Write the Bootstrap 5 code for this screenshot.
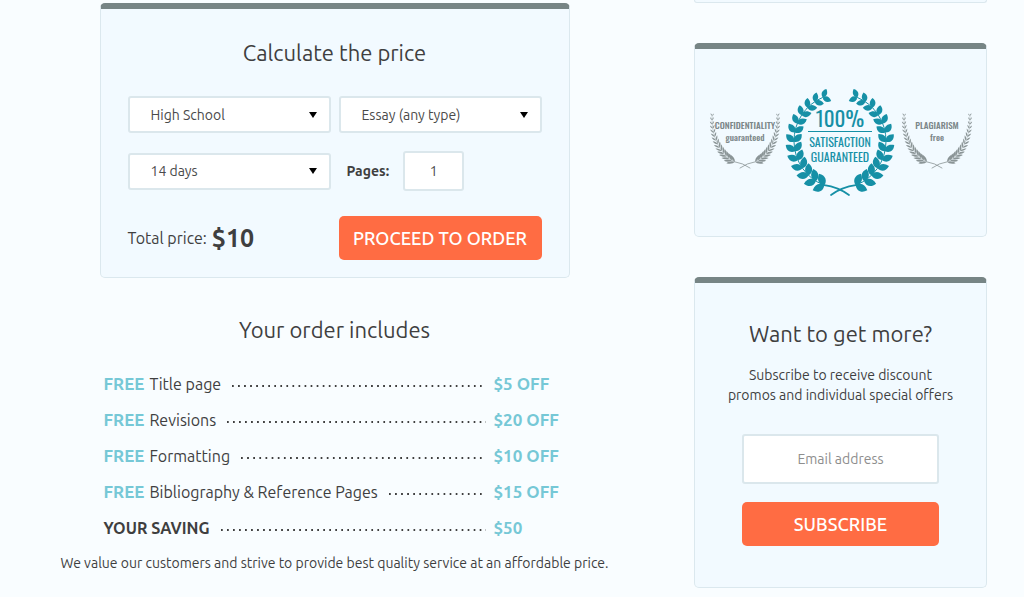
<!DOCTYPE html>
<html lang="en">
<head>
<meta charset="utf-8">
<meta name="viewport" content="width=device-width, initial-scale=1">
<title>Calculate the price</title>
<link href="https://cdn.jsdelivr.net/npm/bootstrap@5.3.0/dist/css/bootstrap.min.css" rel="stylesheet">
<style>
  body { background: #f9fdff; color: #3f3f3f; font-family: Ubuntu, "Noto Sans", sans-serif; font-size: 14px; line-height: 20px; }
  .page-grid { display: grid; grid-template-columns: minmax(0, 1fr) 293px; column-gap: 60px; padding: 0 37px 0 35px; }
  .main-column { padding-top: 3px; }
  .panel { background: #f2faff; border: 1px solid #dbe8ee; border-radius: 5px; }
  .panel-topped { border-top: 6px solid #778585; }
  .panel-end { height: 3px; border-top: 0; border-radius: 0 0 5px 5px; }
  .panel-title { font-size: 22px; line-height: 30px; font-weight: 400; margin: 0; text-align: center; }
  .order-width { width: 100%; max-width: 470px; }
  .side-column { display: flex; flex-direction: column; gap: 40px; }
  .calc-form { padding: 29px 27px 17px; }
  .calc-grid { display: grid; grid-template-columns: 1fr 1fr; column-gap: 8px; row-gap: 18px; align-items: center; margin-top: 28px; }
  .pages-group { display: flex; align-items: center; gap: 14px; padding-left: 8px; }
  .field { border: 2px solid #dbe7ec; border-radius: 3px; color: #4a4a4a; font-size: 14px; line-height: 20px; background-color: #fff; }
  .field-select { height: 37px; padding: 0 32px 0 21px; background-position: right 11px center; background-size: 10px 8px;
    background-image: url("data:image/svg+xml,%3Csvg xmlns='http://www.w3.org/2000/svg' viewBox='0 0 10 8'%3E%3Cpath d='M1 1h8L5 7z' fill='%23000'/%3E%3C/svg%3E"); }
  .field-pages { width: 61px; height: 40px; text-align: center; padding: 0; }
  .field-email { height: 50px; text-align: center; }
  .field-email::placeholder { color: #8e8e8e; opacity: 1; }
  .btn-action { --bs-btn-bg: #ff6c43; --bs-btn-color: #fff; --bs-btn-hover-bg: #f25c32; --bs-btn-hover-color: #fff; --bs-btn-active-bg: #e85328; --bs-btn-active-color: #fff;
    border: 0; border-radius: 5px; height: 44px; padding: 0; font-size: 18px; font-weight: 500; white-space: nowrap; }
  .calc-bottom { margin-top: 7px; }
  .total-row { display: flex; align-items: center; gap: 5px; font-size: 16px; }
  .total-sum { font-size: 25px; font-weight: 600; }
  .order-title { margin: 37px 0 21px; }
  .offer-row { display: flex; align-items: center; height: 36px; font-size: 16px; }
  .offer-free, .offer-price { color: #76c8d6; font-weight: 600; font-size: 17px; }
  .offer-free { margin-right: 5px; }
  .offer-price { width: 76px; }
  .offer-dots { flex: 1; height: 2px; margin: 4px 8px 0 11px; background: radial-gradient(circle at 1px 1px, #3f3f3f 1px, transparent 1px) 0 0 / 6px 2px space; }
  .order-note { margin: 7px 0 0; text-align: center; }
  .subscribe { padding: 36px 27px 41px; text-align: center; }
  .subscribe-form { display: grid; gap: 18px; margin: 29px 20px 0; }
  .seal-panel { padding: 38px 13px 37px; }
  .seal-teal { fill: #1690a6; stroke: #1690a6; }
  .seal-grey { fill: #8a9496; stroke: #8a9496; }
  .seals text { stroke: none; text-anchor: middle; font-family: Oswald, "Liberation Sans Narrow", "DejaVu Sans Condensed", sans-serif; }
</style>
</head>
<body>
<main class="page-grid">
  <div class="main-column d-flex flex-column align-items-center">
    <section class="panel panel-topped order-width">
      <form class="calc-form">
        <h2 class="panel-title">Calculate the price</h2>
        <div class="calc-grid">
          <select class="form-select field field-select" aria-label="Academic level"><option>High School</option></select>
          <select class="form-select field field-select" aria-label="Paper type"><option>Essay (any type)</option></select>
          <select class="form-select field field-select" aria-label="Deadline"><option>14 days</option></select>
          <div class="pages-group">
            <label for="pages" class="fw-bold">Pages:</label>
            <input id="pages" type="text" class="field field-pages" value="1">
          </div>
          <div class="calc-bottom total-row"><span>Total price:</span><span class="total-sum">$10</span></div>
          <button type="button" class="btn btn-action calc-bottom w-100">PROCEED TO ORDER</button>
        </div>
      </form>
    </section>
    <section class="order-width">
      <h2 class="panel-title order-title">Your order includes</h2>
      <ul class="list-unstyled mb-0 ps-1">
        <li class="offer-row"><span class="offer-free">FREE</span><span>Title page</span><span class="offer-dots"></span><span class="offer-price">$5 OFF</span></li>
        <li class="offer-row"><span class="offer-free">FREE</span><span>Revisions</span><span class="offer-dots"></span><span class="offer-price">$20 OFF</span></li>
        <li class="offer-row"><span class="offer-free">FREE</span><span>Formatting</span><span class="offer-dots"></span><span class="offer-price">$10 OFF</span></li>
        <li class="offer-row"><span class="offer-free">FREE</span><span>Bibliography &amp; Reference Pages</span><span class="offer-dots"></span><span class="offer-price">$15 OFF</span></li>
        <li class="offer-row"><strong>YOUR SAVING</strong><span class="offer-dots"></span><span class="offer-price">$50</span></li>
      </ul>
    </section>
    <p class="order-note">We value our customers and strive to provide best quality service at an affordable price.</p>
  </div>

  <aside class="side-column">
    <div class="panel panel-end"></div>
    <section class="panel panel-topped seal-panel">
      <svg class="seals d-block w-100" viewBox="708 87 265 112" role="img" aria-label="Guarantees">
        <defs><path id="leaf" d="M0 0C1.5-3 6-4.2 10-1.2C7 2.2 3 2.6 0 0Z" stroke="none"/></defs>
        <g class="seal-grey" id="wreath-left"></g>
        <g class="seal-teal" id="wreath-main"></g>
        <g class="seal-grey" id="wreath-right"></g>
        <g fill="#7b8688" font-weight="500">
          <text x="745" y="129" font-size="9">CONFIDENTIALITY</text>
          <text x="745" y="141" font-size="9">guaranteed</text>
          <text x="937" y="129" font-size="9">PLAGIARISM</text>
          <text x="937" y="141" font-size="9">free</text>
        </g>
        <g class="seal-teal">
          <text x="840" y="127" font-size="21">100%</text>
          <path d="M808 131.500H872" stroke-width="1"/>
          <text x="840" y="147" font-size="12">SATISFACTION</text>
          <text x="840" y="162" font-size="12">GUARANTEED</text>
        </g>
      </svg>
    </section>
    <section class="panel panel-topped subscribe">
      <h2 class="panel-title">Want to get more?</h2>
      <p class="mt-3 mb-0">Subscribe to receive discount<br>promos and individual special offers</p>
      <form class="subscribe-form">
        <input type="email" class="form-control field field-email" placeholder="Email address" aria-label="Email address">
        <button type="button" class="btn btn-action w-100">SUBSCRIBE</button>
      </form>
    </section>
  </aside>
</main>
<script src="https://cdn.jsdelivr.net/npm/bootstrap@5.3.0/dist/js/bootstrap.bundle.min.js"></script>
<script>
  // Draws a laurel: two mirrored branches of paired leaves growing from the bottom along an ellipse.
  function laurel(id, o) {
    const rad = Math.PI / 180;
    let half = '';
    const at = a => [-o.rx * Math.sin(a * rad), o.ry * Math.cos(a * rad)];
    for (let i = 0; i < o.pairs; i++) {
      const t = i / (o.pairs - 1), a = o.from + (o.to - o.from) * t;
      const [x, y] = at(a), [nx, ny] = at(a + 1);
      const dir = Math.atan2(ny - y, nx - x) / rad;
      const s = o.big + (o.small - o.big) * t;
      half += `<use href="#leaf" transform="translate(${x} ${y}) rotate(${dir - o.spread}) scale(${s} ${s * o.fat})"/>`
            + `<use href="#leaf" transform="translate(${x} ${y}) rotate(${dir + o.spread}) scale(${s} ${-s * o.fat})"/>`;
    }
    const s = at(o.from), e = at(o.to);
    half += `<path fill="none" stroke-width="${o.stem}" d="M${s}A${o.rx} ${o.ry} 0 0 1 ${e}"/>`
          + `<path fill="none" stroke-width="${o.tail}" stroke-linecap="round" d="M${s}Q${o.cross[0]} ${o.cross[1]} ${o.end[0]} ${o.end[1]}"/>`;
    document.getElementById(id).innerHTML =
      `<g transform="translate(${o.cx} ${o.cy})"><g>${half}</g><g transform="scale(-1 1)">${half}</g></g>`;
  }
  laurel('wreath-main', {cx: 840, cy: 141, rx: 46, ry: 47, from: 20, to: 158, pairs: 13, big: 1.25, small: .9, fat: 1.3, spread: 36, stem: 1, tail: 1.7, cross: [-2, 46], end: [9, 54]});
  const side = {cy: 119, rx: 33, ry: 45, from: 18, to: 94, pairs: 15, big: .85, small: .3, fat: .6, spread: 30, stem: .4, tail: .8, cross: [-2, 44], end: [5, 49]};
  laurel('wreath-left', {...side, cx: 745});
  laurel('wreath-right', {...side, cx: 937});
</script>
</body>
</html>
